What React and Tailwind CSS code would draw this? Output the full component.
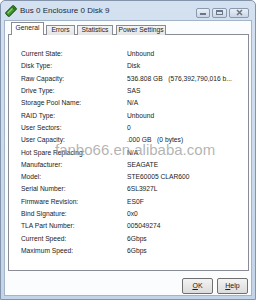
const rows = [
  ["Current State:", "Unbound"],
  ["Disk Type:", "Disk"],
  ["Raw Capacity:", "536.808 GB   (576,392,790,016 b..."],
  ["Drive Type:", "SAS"],
  ["Storage Pool Name:", "N/A"],
  ["RAID Type:", "Unbound"],
  ["User Sectors:", "0"],
  ["User Capacity:", ".000 GB   (0 bytes)"],
  ["Hot Spare Replacing:", "N/A"],
  ["Manufacturer:", "SEAGATE"],
  ["Model:", "STE60005 CLAR600"],
  ["Serial Number:", "6SL3927L"],
  ["Firmware Revision:", "ES0F"],
  ["Bind Signature:", "0x0"],
  ["TLA Part Number:", "005049274"],
  ["Current Speed:", "6Gbps"],
  ["Maximum Speed:", "6Gbps"],
];

function DiskIcon() {
  return (
    <svg width="12" height="12" viewBox="0 0 12 12">
      <g transform="rotate(-45 6 6)">
        <rect x="0.5" y="3.5" width="11" height="5" rx="0.8" fill="#3f9a2c" stroke="#1f5a16" />
        <rect x="2" y="4.6" width="7" height="1.2" fill="#8fd46f" />
        <rect x="9.3" y="4.6" width="1" height="2.8" fill="#1f5a16" />
      </g>
    </svg>
  );
}

function CaptionButton({ w, children }) {
  return (
    <div
      className={`${w} h-[10px] rounded-[2px] border border-[#8a99ad] bg-linear-to-b from-[#e9eff7] to-[#c9d6e6] flex items-center justify-center`}
    >
      {children}
    </div>
  );
}

export default function App() {
  return (
    <div className="relative w-[256px] h-[300px] overflow-hidden rounded-t-[5px] border border-[#8394ab] bg-linear-to-b from-[#d3e1f1] to-[#c3d4e9] flex flex-col font-['Liberation_Sans',Arial,sans-serif] text-[#1b1b1b]">
      <div className="h-[19px] shrink-0 flex items-center pl-[4px] pr-[6px]">
        <DiskIcon />
        <span className="ml-[3px] text-[8px] leading-none text-[#1e2a3a]">
          Bus 0 Enclosure 0 Disk 9
        </span>
        <div className="ml-auto mt-[4px] flex gap-[2px]">
          <CaptionButton w="w-[14px]">
            <div className="w-[6px] h-[2px] bg-[#6c7685] mt-[2px]" />
          </CaptionButton>
          <CaptionButton w="w-[15px]">
            <div className="w-[7px] h-[5px] border border-[#6c7685] border-t-2" />
          </CaptionButton>
          <CaptionButton w="w-[20px]">
            <svg width="7" height="7" viewBox="0 0 7 7">
              <path d="M1 1 L6 6 M6 1 L1 6" stroke="#6c7685" strokeWidth="1.6" />
            </svg>
          </CaptionButton>
        </div>
      </div>

      <div className="mx-[3px] mb-[3px] flex-1 border border-[#a3b3c8] bg-[#fbfcfd] pl-[3px] pr-[2px] pt-[1px] flex flex-col">
        <div className="relative z-10 -mb-px h-[13px] flex items-end text-[6.7px] leading-none">
          <div className="ml-[3px] w-[33px] h-[13px] border border-b-0 border-[#898c95] bg-white flex items-center justify-center pb-[1px]">
            General
          </div>
          <div className="ml-[2px] w-[29px] h-[10px] border border-b-0 border-[#898c95] bg-linear-to-b from-[#f4f4f4] to-[#e4e4e4] flex items-center justify-center">
            Errors
          </div>
          <div className="ml-[2px] w-[36px] h-[10px] border border-b-0 border-[#898c95] bg-linear-to-b from-[#f4f4f4] to-[#e4e4e4] flex items-center justify-center">
            Statistics
          </div>
          <div className="ml-[3px] w-[50px] h-[10px] border border-b-0 border-[#898c95] bg-linear-to-b from-[#f4f4f4] to-[#e4e4e4] flex items-center justify-center">
            Power Settings
          </div>
        </div>

        <div className="h-[237px] border border-[#898c95] bg-white pt-[13px] pl-[12px] text-[6.7px]">
          {rows.map(([label, value]) => (
            <div key={label} className="h-[12.3px] flex items-center whitespace-pre">
              <span className="w-[106px] shrink-0">{label}</span>
              <span>{value}</span>
            </div>
          ))}
        </div>

        <div className="mt-[7px] flex justify-end gap-[4px] pr-[1px] text-[7px]">
          <button className="w-[31px] h-[16px] rounded-[2px] border border-[#707070] bg-linear-to-b from-[#f3f3f3] to-[#dcdcdc] flex items-center justify-center">
            <span>
              <span className="underline">O</span>K
            </span>
          </button>
          <button className="w-[31px] h-[16px] rounded-[2px] border border-[#707070] bg-linear-to-b from-[#f3f3f3] to-[#dcdcdc] flex items-center justify-center">
            <span>
              <span className="underline">H</span>elp
            </span>
          </button>
        </div>
      </div>

      <div className="absolute left-[54px] top-[141px] text-[15px] leading-none text-[#9a9a9a]/75 whitespace-nowrap pointer-events-none">
        fanbo66.en.alibaba.com
      </div>
    </div>
  );
}
